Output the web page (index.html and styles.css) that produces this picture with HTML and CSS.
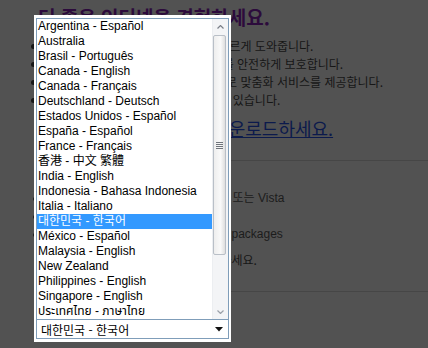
FILE: index.html
```html
<!DOCTYPE html>
<html lang="ko">
<head>
    <meta charset="UTF-8">
    <meta name="viewport" content="width=device-width, initial-scale=1.0">
    <title>Internet Explorer 8 - 지역 선택</title>
    <link rel="stylesheet" href="styles.css">
</head>
<body>
    <div class="page">
        <h1 class="title">더 좋은 인터넷을 경험하세요.</h1>
        <ul class="features">
            <li>새로운 기능들이 웹 페이지 검색을 빠르게 도와줍니다.</li>
            <li>악성 소프트웨어로부터 개인의 정보를 안전하게 보호합니다.</li>
            <li>자주 방문한 사이트를 웹조각 기능으로 맞춤화 서비스를 제공합니다.</li>
            <li>누구나 쉽게 사용할 수 있게 설계되어 있습니다.</li>
        </ul>
        <a class="download" href="#">인터넷 익스플로러 8을 다운로드하세요.</a>
        <hr class="rule">
        <ul class="reqs">
            <li>운영 체제: Windows® XP SP2 이상 또는 Vista</li>
            <li>Windows Server 2003 SP2</li>
            <li>Windows Server 2008의 language packages</li>
        </ul>
        <p class="note">자세한 내용은 시스템 요구 사항 확인하세요.</p>
        <hr class="rule">
    </div>

    <div class="picker">
        <div class="listbox">
            <div class="options">
                <div class="option">Argentina - Español</div>
                <div class="option">Australia</div>
                <div class="option">Brasil - Português</div>
                <div class="option">Canada - English</div>
                <div class="option">Canada - Français</div>
                <div class="option">Deutschland - Deutsch</div>
                <div class="option">Estados Unidos - Español</div>
                <div class="option">España - Español</div>
                <div class="option">France - Français</div>
                <div class="option tc" lang="zh-Hant">香港 - 中文 繁體</div>
                <div class="option">India - English</div>
                <div class="option">Indonesia - Bahasa Indonesia</div>
                <div class="option">Italia - Italiano</div>
                <div class="option selected">대한민국 - 한국어</div>
                <div class="option">México - Español</div>
                <div class="option">Malaysia - English</div>
                <div class="option">New Zealand</div>
                <div class="option">Philippines - English</div>
                <div class="option">Singapore - English</div>
                <div class="option" lang="th">ประเทศไทย - ภาษาไทย</div>
            </div>
            <div class="scrollbar">
                <div class="sb-btn">
                    <svg width="7" height="4" viewBox="0 0 7 4"><path d="M0.5 3.5 L3.5 0.5 L6.5 3.5" fill="none" stroke="#7a7f88" stroke-width="1.2"/></svg>
                </div>
                <div class="sb-track">
                    <div class="sb-thumb">
                        <div class="grip"></div>
                    </div>
                </div>
                <div class="sb-btn">
                    <svg width="7" height="4" viewBox="0 0 7 4"><path d="M0.5 0.5 L3.5 3.5 L6.5 0.5" fill="none" stroke="#9aa0a8" stroke-width="1.2"/></svg>
                </div>
            </div>
        </div>
        <div class="select">
            <span class="select-value">대한민국 - 한국어</span>
            <svg class="caret" width="8" height="5" viewBox="0 0 8 5"><path d="M0 0 H8 L4 4.5 Z" fill="#111"/></svg>
        </div>
    </div>
</body>
</html>
```

FILE: styles.css
```css
body {
    margin: 0;
    background-color: #525252;
    font-family: "Noto Sans CJK KR", "Liberation Sans", sans-serif;
    color: #161616;
    height: 348px;
    overflow: hidden;
}
.page {
    padding: 6px 0 0 38px;
}
.title {
    margin: 0;
    font-size: 19px;
    line-height: 22px;
    font-weight: bold;
    color: #2c0b3c;
    white-space: nowrap;
}
.features {
    margin: 9px 0 0 0;
    padding-left: 9px;
    list-style: disc;
    font-size: 12px;
    line-height: 18px;
    white-space: nowrap;
}
.download {
    display: block;
    margin-top: 9px;
    font-size: 18px;
    line-height: 20px;
    color: #0c1a4c;
    white-space: nowrap;
}
.rule {
    margin: 22px 0 0 0;
    border: 0;
    border-top: 1px solid #464646;
}
.reqs {
    margin: 28px 0 0 0;
    padding-left: 9px;
    list-style: disc;
    font-family: "Liberation Sans", "Noto Sans CJK KR", sans-serif;
    font-size: 12px;
    line-height: 18px;
    color: #1c1c1c;
    white-space: nowrap;
}
.note {
    margin: 8px 0 0 0;
    font-size: 12px;
    line-height: 18px;
    white-space: nowrap;
}

/* region picker popup, drawn over the dimmed page */
.picker {
    position: absolute;
    left: 34px;
    top: 15px;
    width: 193px;
    padding: 3px 2px 3px 2px;
    background-color: #fff;
}
.listbox {
    display: flex;
    height: 300px;
    border: 1px solid #7f9db9;
    font-family: "Liberation Sans", "Noto Sans CJK KR", "Noto Sans Thai", sans-serif;
    font-size: 12px;
    color: #000;
}
.options {
    flex: 1;
    overflow: hidden;
}
.option {
    height: 15px;
    line-height: 15px;
    padding-left: 1px;
    white-space: nowrap;
}
.option.tc {
    font-family: "Liberation Sans", "Noto Sans CJK TC", sans-serif;
}
.option.selected {
    background-color: #3399ff;
    color: #fff;
}
.scrollbar {
    width: 15px;
    display: flex;
    flex-direction: column;
    background-color: #f3f4f6;
    border-left: 1px solid #eceef1;
}
.sb-btn {
    height: 15px;
    display: flex;
    align-items: center;
    justify-content: center;
}
.sb-track {
    flex: 1;
    padding-right: 2px;
}
.sb-thumb {
    height: 218px;
    margin-top: 1px;
    border: 1px solid #b9bfc7;
    border-radius: 2px;
    background: linear-gradient(to right, #eeeeee, #f9f9f9 60%, #dedede);
    display: flex;
    align-items: center;
    justify-content: center;
}
.grip {
    width: 7px;
    height: 7px;
    background: repeating-linear-gradient(to bottom, #6f747b 0, #6f747b 1px, transparent 1px, transparent 2px);
}
.select {
    display: flex;
    align-items: center;
    justify-content: space-between;
    height: 18px;
    border: 1px solid #7f9db9;
    border-top: 0;
    padding: 0 5px 0 4px;
    font-family: "Noto Sans CJK KR", sans-serif;
    font-size: 12px;
    color: #000;
}
```
